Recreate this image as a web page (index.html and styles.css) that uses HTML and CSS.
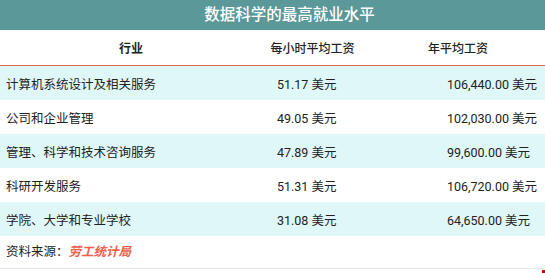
FILE: index.html
```html
<!DOCTYPE html>
<html lang="zh">
<head>
  <meta charset="UTF-8">
  <meta name="viewport" content="width=device-width, initial-scale=1.0">
  <title>数据科学的最高就业水平</title>
  <link rel="stylesheet" href="styles.css">
</head>
<body>
  <div class="tabla">
    <div class="titulo">数据科学的最高就业水平</div>
    <table>
      <colgroup>
        <col class="c1">
        <col class="c2">
        <col class="c3">
      </colgroup>
      <thead>
        <tr>
          <th class="col1">行业</th>
          <th class="col2">每小时平均工资</th>
          <th>年平均工资</th>
        </tr>
      </thead>
      <tbody>
        <tr>
          <td>计算机系统设计及相关服务</td>
          <td class="col2">51.17 美元</td>
          <td class="col3">106,440.00 美元</td>
        </tr>
        <tr>
          <td>公司和企业管理</td>
          <td class="col2">49.05 美元</td>
          <td class="col3">102,030.00 美元</td>
        </tr>
        <tr>
          <td>管理、科学和技术咨询服务</td>
          <td class="col2">47.89 美元</td>
          <td class="col3">99,600.00 美元</td>
        </tr>
        <tr>
          <td>科研开发服务</td>
          <td class="col2">51.31 美元</td>
          <td class="col3">106,720.00 美元</td>
        </tr>
        <tr>
          <td>学院、大学和专业学校</td>
          <td class="col2">31.08 美元</td>
          <td class="col3">64,650.00 美元</td>
        </tr>
      </tbody>
    </table>
    <p class="fuente">资料来源：<a href="#">劳工统计局</a></p>
  </div>
  <span class="marca"></span>
</body>
</html>
```

FILE: styles.css
```css
body {
  margin: 0;
  padding: 0;
  font-family: Roboto, "Noto Sans CJK SC", sans-serif;
  color: #222;
  background-color: #fff;
  position: relative;
  height: 273px;
  overflow: hidden;
}

.tabla {
  width: 545px;
  border-bottom: 1px solid #e6e6e6;
}

.titulo {
  height: 30px;
  line-height: 30px;
  padding-left: 34px;
  background-color: #5a9899;
  color: #fff;
  text-align: center;
  font-size: 15.5px;
  font-weight: 500;
}

table {
  width: 545px;
  border-collapse: collapse;
  table-layout: fixed;
}

.c1 {
  width: 262px;
}

.c2 {
  width: 109px;
}

.c3 {
  width: 174px;
}

th {
  height: 35px;
  padding: 0;
  font-size: 12px;
  font-weight: 500;
  text-align: center;
  border-bottom: 1px solid #e0624f;
}

th.col1 {
  font-weight: 700;
}

th.col2 {
  padding-right: 8px;
}

td {
  height: 34px;
  padding: 0 0 0 6px;
  font-size: 12.5px;
  white-space: nowrap;
}

td.col2 {
  padding-left: 15px;
}

td.col3 {
  padding-left: 76px;
}

tbody tr:nth-child(odd) {
  background-color: #e0f7f8;
}

.fuente {
  margin: 0;
  height: 32px;
  line-height: 32px;
  padding-left: 6px;
  font-size: 12.5px;
}

.fuente a {
  color: #f0604d;
  font-weight: 700;
  font-style: italic;
  text-decoration: none;
}

.marca {
  position: absolute;
  right: 0;
  top: 270px;
  width: 3px;
  height: 3px;
  background-color: #d40000;
}
```
